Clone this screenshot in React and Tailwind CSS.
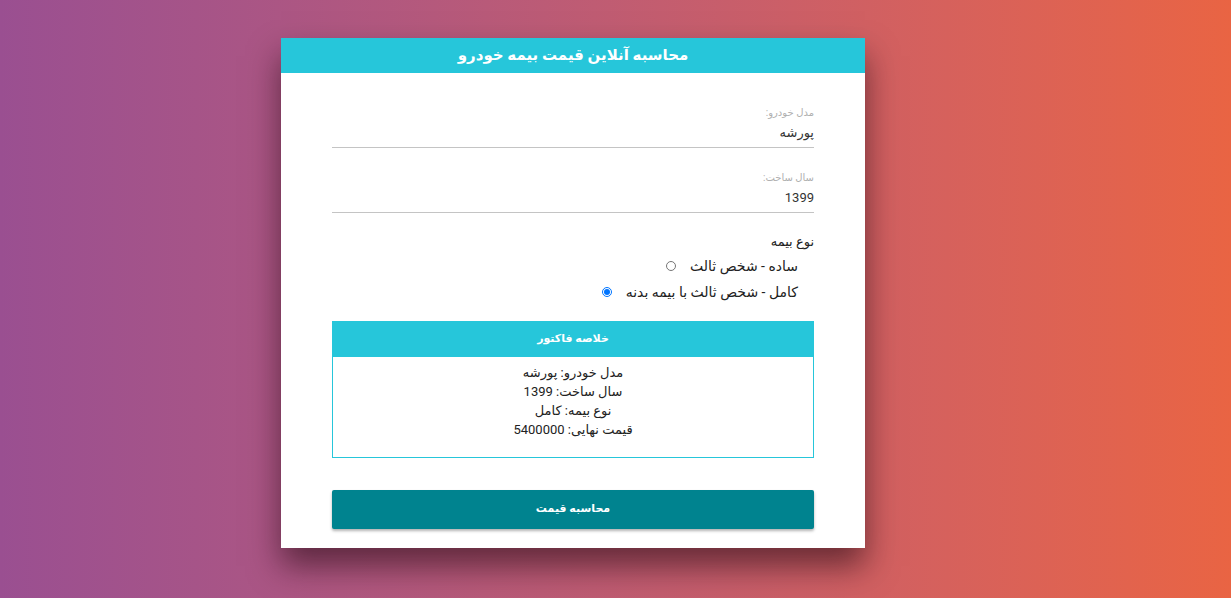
const FONT = { fontFamily: 'Roboto, "DejaVu Sans", "Noto Sans", sans-serif' }

function Field({ label, value }) {
  return (
    <div className="border-b border-[#c4c4c4] pb-[5px]">
      <div className="text-[10px] leading-[14px] text-[#b0b0b0]">{label}</div>
      <div className="mt-[4px] text-[13px] leading-[18px] text-[#333]">{value}</div>
    </div>
  )
}

function Radio({ label, checked }) {
  return (
    <label className="flex items-center gap-[14px] pr-[16px] text-[14px] leading-[26px] text-[#222]">
      <span>{label}</span>
      {checked ? (
        <span className="flex h-[10px] w-[10px] items-center justify-center rounded-full border border-[#0075ff]">
          <span className="h-[6px] w-[6px] rounded-full bg-[#0075ff]" />
        </span>
      ) : (
        <span className="h-[10px] w-[10px] rounded-full border border-[#767676] bg-white" />
      )}
    </label>
  )
}

export default function App() {
  return (
    <div
      style={FONT}
      className="flex h-[598px] w-full bg-gradient-to-r from-[#9a4f91] to-[#e96443] pl-[281px] pt-[38px]"
    >
      <div dir="rtl" className="h-[510px] w-[584px] bg-white shadow-[0_18px_30px_rgba(40,10,20,0.6)]">
        <div className="flex h-[35px] items-center justify-center bg-[#26c6da] text-[15px] font-bold text-white">
          محاسبه آنلاین قیمت بیمه خودرو
        </div>
        <div className="px-[51px] pt-[33px]">
          <Field label="مدل خودرو:" value="پورشه" />
          <div className="mt-[23px]">
            <Field label="سال ساخت:" value="1399" />
          </div>
          <div className="mt-[20px] text-[13px] leading-[18px] text-[#222]">نوع بیمه</div>
          <div className="mt-[2px] flex flex-col items-start">
            <Radio label="ساده - شخص ثالث" />
            <Radio label="کامل - شخص ثالث با بیمه بدنه" checked />
          </div>
          <div className="mt-[16px] border border-[#26c6da]">
            <div className="flex h-[35px] items-center justify-center bg-[#26c6da] text-[11px] font-bold text-white">
              خلاصه فاکتور
            </div>
            <div className="flex h-[100px] flex-col items-center pt-[6px] text-[13px] leading-[19px] text-[#222]">
              <div>مدل خودرو: پورشه</div>
              <div>سال ساخت: 1399</div>
              <div>نوع بیمه: کامل</div>
              <div>قیمت نهایی: 5400000</div>
            </div>
          </div>
          <button className="mt-[32px] flex h-[39px] w-full items-center justify-center rounded-[2px] bg-[#00838f] text-[11px] font-bold text-white shadow-[0_2px_3px_rgba(0,0,0,0.3)]">
            محاسبه قیمت
          </button>
        </div>
      </div>
    </div>
  )
}
